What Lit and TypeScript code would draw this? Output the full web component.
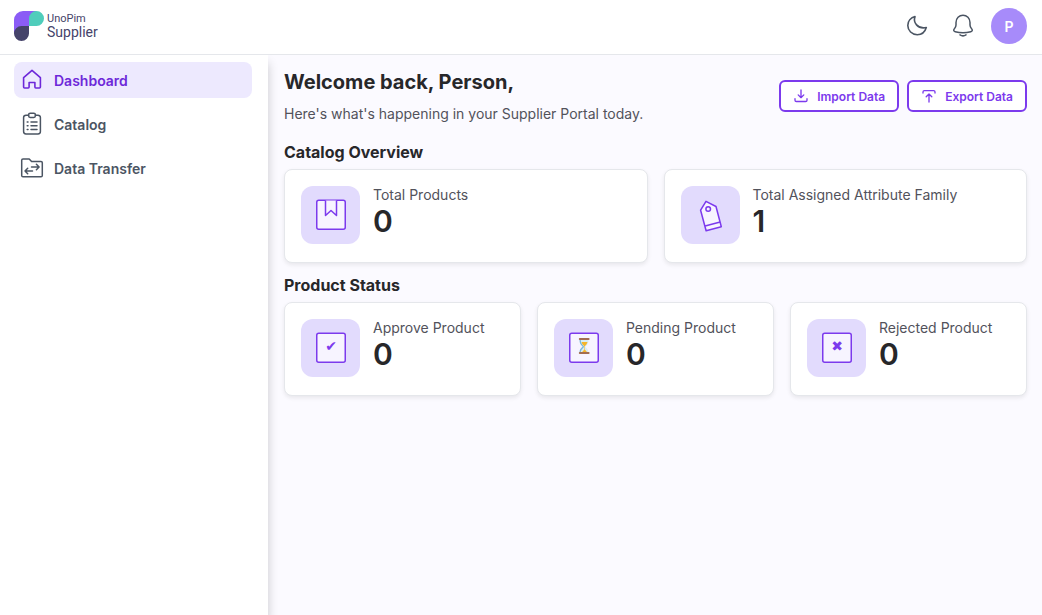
import { LitElement, html, css, svg } from "lit";
import { customElement, property } from "lit/decorators.js";

const icons: Record<string, unknown> = {
  home: svg`<path d="M3.600 9.600 12 2.400l8.400 7.200v9.400c0 .7-.4 1-1 1h-3.600c-.6 0-.9-.3-.9-.9v-4.600H9.100v4.600c0 .6-.3.9-.9.9H4.600c-.6 0-1-.3-1-1Z"/>`,
  catalog: svg`<path d="M8.600 3.200H6a2.400 2.400 0 0 0-2.400 2.400v14A2.400 2.400 0 0 0 6 22h12a2.400 2.400 0 0 0 2.400-2.400v-14A2.400 2.400 0 0 0 18 3.200h-2.600"/><rect x="8.600" y="1.200" width="6.800" height="4.200" rx="1.600"/><path d="M11 10h6M11 13.700h6M11 17.500h6M7.200 10h.8M7.200 13.700h.8M7.200 17.500h.8"/>`,
  transfer: svg`<path d="M1.700 19.500V4.200c0-.8.500-1.300 1.300-1.300h6.200l2.400 2.600h9.400c.8 0 1.300.5 1.300 1.300v12.700c0 .8-.5 1.300-1.300 1.300H3c-.8 0-1.300-.5-1.300-1.300Z"/><path d="M11.500 11h7.500M16.400 8.300 19.100 11l-2.700 2.700M12.500 15H5M7.700 12.300 5 15l2.700 2.700"/>`,
  moon: svg`<path d="M10 2.600C7.900 8.300 12.500 15.400 21.300 13.500 19.900 18.200 16.400 20.700 12.300 20.700 7 20.700 2.800 16.500 2.800 11.500c0-4.300 3-7.800 7.200-8.900Z"/>`,
  bell: svg`<path d="M5 11V8.500a7 7.300 0 0 1 14 0V11c0 2 .8 2.700 1.900 4.100.8 1.300.3 2.200-1.100 2.600-4.900 1.300-10.700 1.300-15.600 0-1.400-.4-1.900-1.300-1.100-2.600C4.200 13.700 5 13 5 11Z"/><path d="M9 20.900c1.700 1.100 4.300 1.100 6 0"/>`,
  download: svg`<path d="M12 3v11M7.800 10.300 12 14.500l4.200-4.200M3 16v2.200c0 1.200.9 2 2 2h14c1.100 0 2-.8 2-2V16"/>`,
  upload: svg`<path d="M12 21V9M7.800 13.200 12 9l4.200 4.200M3 7.500V6c0-1.200.9-2 2-2h14c1.100 0 2 .8 2 2v1.500"/>`,
};

const icon = (name: string, size: number, stroke = 1.5) => html`<svg
  width=${size} height=${size} viewBox="0 0 24 24" fill="none" stroke="currentColor"
  stroke-width=${stroke} stroke-linecap="round" stroke-linejoin="round" aria-hidden="true"
>${icons[name]}</svg>`;

const square = svg`<rect x="15.750" y="14.250" width="28.500" height="29" rx="2"/>`;

const tiles: Record<string, unknown> = {
  products: svg`${square}<path d="M24.500 14.500v15l5.500-5 5.500 5v-15"/>`,
  family: svg`<path d="m25 15.300 10 5.200 5.300 20.200-15.200 4-5.500-20.500Z"/><path d="m24.100 40 15.100-4"/><circle cx="27.200" cy="23" r="2.300"/>`,
  approve: svg`${square}<text x="30" y="32" text-anchor="middle" class="glyph">✔</text>`,
  pending: svg`${square}<g stroke="none"><path fill="#d9edf5" d="M26 21h8.500c0 4-1.500 5-3.300 6.800 1.800 2 3.300 3 3.300 6.200H26c0-3.500 1.500-4.500 3.300-6.200-1.800-2-3.300-3-3.300-6.800Z"/><path fill="#78b7d8" d="M25.500 21h1.300c0 3.600 1.500 4.500 3.200 6.500v.5c-1.700 2-3.200 2.700-3.200 6h-1.300c0-3.700 1.300-4.700 3.200-6.200-1.900-2-3.200-3.400-3.200-6.800Z"/><path fill="#f5b52c" d="M27.500 23h6c-.5 2-1.500 3-2.700 4.300v3.200l3 3.500h-6.500l3-3.500v-3.200c-1.200-1.300-2.400-2.300-2.800-4.300Z"/><rect fill="#a36d50" x="24.800" y="19" width="10.800" height="2" rx="1"/><rect fill="#a36d50" x="24.800" y="33" width="10.800" height="2" rx="1"/></g>`,
  rejected: svg`${square}<text x="30" y="32" text-anchor="middle" class="glyph">✖</text>`,
};

@customElement("stat-card")
class StatCard extends LitElement {
  @property() label = "";
  @property() value = "";
  @property() tile = "";

  static styles = css`
    :host {
      display: block;
    }
    .card {
      display: flex;
      gap: 12px;
      padding: 16px;
      border: 1px solid #e5e7eb;
      border-radius: 8px;
      background: #fff;
      box-shadow: 0 2px 4px rgba(0, 0, 0, 0.08);
    }
    .tile {
      display: flex;
      flex: none;
      height: 60px;
    }
    .tile svg {
      fill: #f7f4ff;
      stroke: #7c3aed;
      stroke-width: 1.5;
      stroke-linejoin: round;
    }
    .tile .back {
      fill: #e2dbfd;
      stroke: none;
    }
    .glyph {
      font: 14px "DejaVu Sans", sans-serif;
      fill: #7c3aed;
      stroke: none;
    }
    .label,
    .value {
      margin: 0;
    }
    .label {
      font-size: 14px;
      line-height: 18px;
      color: #52525b;
    }
    .value {
      font-size: 30px;
      line-height: 34px;
      font-weight: 600;
      color: #27272a;
    }
  `;

  render() {
    return html`<div class="card">
      <div class="tile">
        <svg width="60" height="60" viewBox="0 0 60 60" aria-hidden="true">
          <rect class="back" width="59" height="58" rx="12" />
          ${tiles[this.tile]}
        </svg>
      </div>
      <div>
        <p class="label">${this.label}</p>
        <p class="value">${this.value}</p>
      </div>
    </div>`;
  }
}

@customElement("app-root")
class AppRoot extends LitElement {
  static styles = css`
    * {
      box-sizing: border-box;
    }
    :host {
      display: flex;
      flex-direction: column;
      min-height: 100vh;
      font-family: Inter, sans-serif;
      background: #fbfaff;
      color: #27272a;
    }
    svg {
      flex: none;
    }
    header {
      display: flex;
      align-items: center;
      justify-content: space-between;
      padding: 8px 15px 10px 14px;
      border-bottom: 1px solid #e5e7eb;
      background: #fff;
    }
    .logo {
      display: flex;
      align-items: center;
      gap: 3px;
      color: #45436a;
      text-decoration: none;
      font-family: Roboto, sans-serif;
    }
    .name {
      display: flex;
      flex-direction: column;
      padding-bottom: 2px;
    }
    .brand {
      font-size: 11px;
      line-height: 13px;
    }
    .portal {
      font-size: 14px;
      line-height: 14px;
    }
    .tools {
      display: flex;
      align-items: center;
      gap: 10px;
      color: #4b5563;
    }
    button {
      font: inherit;
      cursor: pointer;
    }
    .tool {
      display: flex;
      padding: 6px;
      border: 0;
      background: none;
      color: inherit;
    }
    .avatar {
      width: 36px;
      height: 36px;
      padding: 0;
      border: 0;
      border-radius: 50%;
      background: #a78bfa;
      color: #fff;
      font-size: 14px;
      font-weight: 600;
    }
    .body {
      display: flex;
      flex: 1;
    }
    nav {
      display: flex;
      flex: none;
      flex-direction: column;
      gap: 8px;
      width: 268px;
      padding: 7px 16px 7px 14px;
      background: #fff;
      box-shadow: 0 8px 10px rgba(0, 0, 0, 0.2);
      clip-path: inset(0 -16px 0 0);
    }
    .item {
      display: flex;
      align-items: center;
      gap: 10px;
      height: 36px;
      padding: 0 6px;
      border-radius: 8px;
      color: #4b5563;
      font-size: 14px;
      font-weight: 600;
      text-decoration: none;
    }
    .active {
      background: #ede9fe;
      color: #6d28d9;
    }
    main {
      flex: 1;
      min-width: 0;
      padding: 11px 15px 16px 16px;
    }
    .intro {
      display: flex;
      align-items: center;
      justify-content: space-between;
      gap: 16px;
      padding-bottom: 15px;
    }
    .greeting {
      display: flex;
      flex-direction: column;
      gap: 4px;
    }
    h1,
    h2,
    p {
      margin: 0;
    }
    h1 {
      font-size: 20px;
      line-height: 32px;
      font-weight: 700;
    }
    .greeting p {
      font-size: 14px;
      line-height: 24px;
      color: #52525b;
    }
    .actions {
      display: flex;
      flex: none;
      gap: 8px;
    }
    .action {
      display: flex;
      align-items: center;
      gap: 8px;
      height: 32px;
      padding: 0 12px;
      border: 2px solid #7c3aed;
      border-radius: 6px;
      background: #fff;
      color: #7c3aed;
      font-size: 12px;
      font-weight: 600;
    }
    h2 {
      padding-bottom: 6px;
      font-size: 16px;
      line-height: 22px;
      font-weight: 700;
    }
    .row {
      display: grid;
      grid-auto-columns: minmax(0, 1fr);
      grid-auto-flow: column;
      gap: 16px;
      padding-bottom: 11px;
    }
  `;

  render() {
    return html`
      <header>
        <a class="logo" href="#">
          <svg width="30" height="30" viewBox="0 0 30 30" aria-hidden="true">
            <path fill="#8b5cf6" d="M9 0h13v15H0V9a9 9 0 0 1 9-9Z" />
            <path fill="#4fcdbb" d="M15 15V7.500A7.500 7.500 0 0 1 22.500 0a7.500 7.500 0 0 1 0 15Z" />
            <path fill="#8b5cf6" d="M0 14h15v8H0Z" />
            <path fill="#45436a" d="M7.500 15H15v7.500a7.500 7.500 0 0 1-15 0A7.500 7.500 0 0 1 7.500 15Z" />
          </svg>
          <span class="name"><span class="brand">UnoPim</span><span class="portal">Supplier</span></span>
        </a>
        <div class="tools">
          <button class="tool" aria-label="Dark mode">${icon("moon", 24, 1.6)}</button>
          <button class="tool" aria-label="Notifications">${icon("bell", 24)}</button>
          <button class="avatar">P</button>
        </div>
      </header>
      <div class="body">
        <nav>
          <a class="item active" href="#">${icon("home", 24, 1.6)}Dashboard</a>
          <a class="item" href="#">${icon("catalog", 24)}Catalog</a>
          <a class="item" href="#">${icon("transfer", 24)}Data Transfer</a>
        </nav>
        <main>
          <div class="intro">
            <div class="greeting">
              <h1>Welcome back, Person,</h1>
              <p>Here's what's happening in your Supplier Portal today.</p>
            </div>
            <div class="actions">
              <button class="action">${icon("download", 16, 2)}Import Data</button>
              <button class="action">${icon("upload", 16, 2)}Export Data</button>
            </div>
          </div>
          <h2>Catalog Overview</h2>
          <div class="row">
            <stat-card label="Total Products" value="0" tile="products"></stat-card>
            <stat-card label="Total Assigned Attribute Family" value="1" tile="family"></stat-card>
          </div>
          <h2>Product Status</h2>
          <div class="row">
            <stat-card label="Approve Product" value="0" tile="approve"></stat-card>
            <stat-card label="Pending Product" value="0" tile="pending"></stat-card>
            <stat-card label="Rejected Product" value="0" tile="rejected"></stat-card>
          </div>
        </main>
      </div>
    `;
  }
}
